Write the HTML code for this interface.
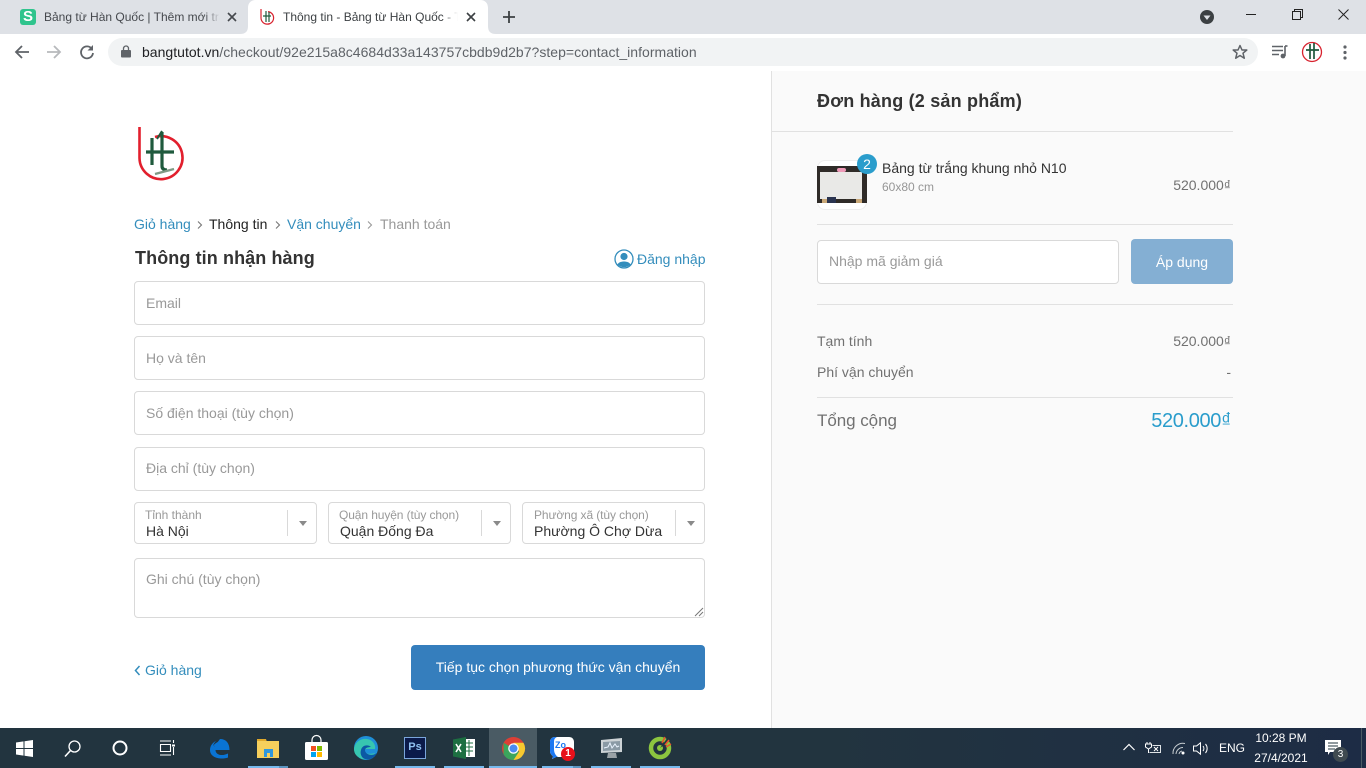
<!DOCTYPE html>
<html><head><meta charset="utf-8"><style>
*{box-sizing:border-box}
html,body{margin:0;padding:0;width:1366px;height:768px;overflow:hidden;background:#fff;font-family:"Liberation Sans","Noto Sans CJK SC",sans-serif}
.t{position:absolute;white-space:nowrap;font-size:14px;line-height:18px}
.a{position:absolute}
svg{position:absolute;overflow:visible}
.inp{position:absolute;left:134px;width:571px;height:44px;border:1px solid #d9d9d9;border-radius:4px;background:#fff}
.sel{position:absolute;top:502px;width:183px;height:42px;border:1px solid #d9d9d9;border-radius:4px;background:#fff}
.sel i{position:absolute;right:28px;top:7px;height:26px;width:1px;background:#d9d9d9}
.sel b{position:absolute;right:9px;top:18px;width:0;height:0;border-left:4px solid transparent;border-right:4px solid transparent;border-top:5px solid #8a8a8a}
.ph{color:#999}
.bl{color:#338dbc}
.d{color:#333}
.ul{position:absolute;bottom:0;height:2px;background:#76b9ed}
</style></head><body>

<!-- browser chrome -->
<div class="a" style="left:0;top:0;width:1366px;height:34px;background:#dee1e6"></div>
<svg style="left:240px;top:0" width="256" height="34"><path d="M0 34C6 34 8 31 8 26V8C8 3 11 0 16 0H240C245 0 248 3 248 8V26C248 31 250 34 256 34Z" fill="#fff"/></svg>
<div class="a" style="left:0;top:34px;width:1366px;height:37px;background:#fff"></div>
<div class="a" style="left:20px;top:9px;width:16px;height:16px;background:#2fc48d;border-radius:3px"></div>
<div class="t" style="left:20px;top:8px;width:16px;text-align:center;color:#fff;font-weight:bold;font-size:15px">S</div>
<div class="t" style="left:44px;top:8px;font-size:12px;width:176px;overflow:hidden;color:#45484d">Bảng từ Hàn Quốc | Thêm mới trang</div>
<div class="a" style="left:204px;top:8px;width:16px;height:18px;background:linear-gradient(90deg,rgba(222,225,230,0),#dee1e6)"></div>
<svg style="left:227px;top:12px" width="10" height="10"><path d="M1 1L9 9M9 1L1 9" stroke="#45484d" stroke-width="1.6"/></svg>
<svg style="left:259px;top:8px" width="16" height="18" viewBox="0 0 16 18"><path d="M2 1V10A6.300 6.300 0 1 0 9 3.600" fill="none" stroke="#d8232f" stroke-width="1.200"/><path d="M7 3V14M4 8H12M10 4V14" stroke="#1e5a3c" stroke-width="1.200" fill="none"/></svg>
<div class="t" style="left:283px;top:8px;font-size:12px;width:175px;overflow:hidden;color:#3c4043">Thông tin - Bảng từ Hàn Quốc - Thêm</div>
<div class="a" style="left:442px;top:8px;width:16px;height:18px;background:linear-gradient(90deg,rgba(255,255,255,0),#fff)"></div>
<svg style="left:466px;top:12px" width="10" height="10"><path d="M1 1L9 9M9 1L1 9" stroke="#3c4043" stroke-width="1.600"/></svg>
<svg style="left:503px;top:11px" width="12" height="12"><path d="M6 0V12M0 6H12" stroke="#3c4043" stroke-width="1.800"/></svg>

<svg style="left:1200px;top:10px" width="14" height="14"><circle cx="7" cy="7" r="7" fill="#3c4043"/><path d="M3.500 5.500H10.500L7 10Z" fill="#dee1e6"/></svg>
<div class="a" style="left:1246px;top:14px;width:10px;height:1px;background:#222"></div>
<svg style="left:1292px;top:9px" width="11" height="11"><path d="M.5 2.500H8.500V10.500H.5ZM2.500 2.500V.5H10.500V8.500H8.500" fill="none" stroke="#222"/></svg>
<svg style="left:1338px;top:9px" width="11" height="11"><path d="M.5 .5L10.500 10.500M10.500 .5L.5 10.500" stroke="#222" stroke-width="1"/></svg>

<svg style="left:14px;top:44px" width="16" height="16"><path d="M15 8H2M8 2L2 8L8 14" fill="none" stroke="#5f6368" stroke-width="1.800"/></svg>
<svg style="left:46px;top:44px" width="16" height="16"><path d="M1 8H14M8 2L14 8L8 14" fill="none" stroke="#b7b9bc" stroke-width="1.800"/></svg>
<svg style="left:79px;top:44px" width="16" height="16"><path d="M13 5A6 6 0 1 0 14 9" fill="none" stroke="#5f6368" stroke-width="1.800"/><path d="M14 1V6.500H8.500Z" fill="#5f6368"/></svg>
<div class="a" style="left:108px;top:38px;width:1150px;height:28px;border-radius:14px;background:#f1f3f4"></div>
<svg style="left:121px;top:45px" width="10" height="13"><path d="M2.500 5V3.500A2.500 2.500 0 0 1 7.500 3.500V5" fill="none" stroke="#5f6368" stroke-width="1.300"/><rect y="5" width="10" height="7.500" rx="1" fill="#5f6368"/></svg>
<div class="t" style="left:142px;top:43px;font-size:14px;color:#5f6368;letter-spacing:.02px"><span style="color:#202124">bangtutot.vn</span>/checkout/92e215a8c4684d33a143757cbdb9d2b7?step=contact_information</div>
<svg style="left:1232px;top:44px" width="16" height="16" viewBox="0 0 16 16"><path d="M8 1.500L10 6H14.800L11 9.200L12.300 14.200L8 11.500L3.700 14.200L5 9.200L1.200 6H6Z" fill="none" stroke="#5f6368" stroke-width="1.500" stroke-linejoin="round"/></svg>
<svg style="left:1272px;top:45px" width="16" height="14"><path d="M0 1.500H11M0 5.500H11M0 9.500H7" stroke="#5f6368" stroke-width="1.400"/><path d="M13 1V11" stroke="#5f6368" stroke-width="1.600"/><path d="M13 1H15.500" stroke="#5f6368" stroke-width="1.600"/><circle cx="11" cy="11" r="2.400" fill="#5f6368"/></svg>
<svg style="left:1301px;top:41px" width="22" height="22" viewBox="0 0 22 22"><circle cx="11" cy="11" r="9.500" fill="#fff" stroke="#d8232f" stroke-width="1.300"/><path d="M9 3V18M13 2V18M5 9H18" stroke="#1e5a3c" stroke-width="1.700" fill="none"/></svg>
<svg style="left:1343px;top:45px" width="4" height="15"><circle cx="2" cy="2" r="1.600" fill="#5f6368"/><circle cx="2" cy="7.500" r="1.600" fill="#5f6368"/><circle cx="2" cy="13" r="1.600" fill="#5f6368"/></svg>

<!-- right panel -->
<div class="a" style="left:771px;top:71px;width:595px;height:657px;background:#fafafa;border-left:1px solid #e1e1e1"></div>
<div class="t" style="left:817px;top:90px;font-size:18px;line-height:22px;font-weight:bold;color:#333;letter-spacing:.2px">Đơn hàng (2 sản phẩm)</div>
<div class="a" style="left:772px;top:131px;width:461px;height:1px;background:#e1e1e1"></div>

<div class="a" style="left:817px;top:160px;width:50px;height:50px;border-radius:8px;border:1px solid #eee;background:#fff"></div>
<div class="a" style="left:817px;top:166px;width:50px;height:37px;background:#2f2b28"></div>
<div class="a" style="left:820px;top:172px;width:42px;height:27px;background:#e9e9e7"></div>
<div class="a" style="left:837px;top:168px;width:9px;height:4px;border-radius:2px;background:#ee9ab8"></div>
<div class="a" style="left:822px;top:199px;width:6px;height:4px;background:#c9a878"></div>
<div class="a" style="left:856px;top:199px;width:6px;height:4px;background:#c9a878"></div>
<div class="a" style="left:827px;top:197px;width:9px;height:6px;background:#2a3450"></div>
<div class="t" style="left:857px;top:154px;width:20px;height:20px;border-radius:50%;background:#2a9dcc;color:#fff;text-align:center;line-height:20px;font-size:14px">2</div>
<div class="t" style="left:882px;top:159px;color:#333">Bảng từ trắng khung nhỏ N10</div>
<div class="t" style="left:882px;top:180px;font-size:12px;line-height:15px;color:#969696">60x80 cm</div>
<div class="t" style="right:135px;top:176px;color:#717171">520.000₫</div>
<div class="a" style="left:817px;top:224px;width:416px;height:1px;background:#e1e1e1"></div>

<div class="a" style="left:817px;top:240px;width:302px;height:44px;background:#fff;border:1px solid #d9d9d9;border-radius:4px"></div>
<div class="t ph" style="left:829px;top:252px">Nhập mã giảm giá</div>
<div class="t" style="left:1131px;top:239px;width:102px;height:45px;background:#84afd3;border-radius:4px;color:#fff;text-align:center;line-height:46px">Áp dụng</div>
<div class="a" style="left:817px;top:304px;width:416px;height:1px;background:#e1e1e1"></div>

<div class="t" style="left:817px;top:332px;color:#717171">Tạm tính</div>
<div class="t" style="right:135px;top:332px;color:#717171">520.000₫</div>
<div class="t" style="left:817px;top:363px;color:#717171">Phí vận chuyển</div>
<div class="t" style="right:135px;top:363px;color:#717171">-</div>
<div class="a" style="left:817px;top:397px;width:416px;height:1px;background:#e1e1e1"></div>
<div class="t" style="left:817px;top:411px;font-size:17px;line-height:20px;color:#717171;letter-spacing:-.05px">Tổng cộng</div>
<div class="t bl" style="right:135px;top:409px;font-size:20px;line-height:24px;color:#2a9dcc;letter-spacing:-.35px">520.000₫</div>

<!-- left -->
<svg style="left:137px;top:126px" width="48" height="57" viewBox="0 0 48 57"><path d="M2.500 1V32A21.500 21.500 0 1 0 18 11" fill="none" stroke="#e21f2d" stroke-width="2.600"/><path d="M15 12V39M25 6V40C25 43 27 44 30 44M9 26H37" stroke="#1f5a3d" stroke-width="3.200" fill="none"/><path d="M25 5L20 13" stroke="#1f5a3d" stroke-width="2" fill="none"/><path d="M18 48L37 43" stroke="#7f9a85" stroke-width="2.400"/></svg>

<div class="t bl" style="left:134px;top:215px">Giỏ hàng</div>
<svg style="left:197px;top:221px" width="6" height="8"><path d="M1 .5L4.500 4L1 7.500" fill="none" stroke="#777" stroke-width="1.100"/></svg>
<div class="t" style="left:209px;top:215px;color:#222">Thông tin</div>
<svg style="left:275px;top:221px" width="6" height="8"><path d="M1 .5L4.500 4L1 7.500" fill="none" stroke="#777" stroke-width="1.100"/></svg>
<div class="t bl" style="left:287px;top:215px">Vận chuyển</div>
<svg style="left:367px;top:221px" width="6" height="8"><path d="M1 .5L4.500 4L1 7.500" fill="none" stroke="#999" stroke-width="1.100"/></svg>
<div class="t" style="left:380px;top:215px;color:#999">Thanh toán</div>

<div class="t" style="left:135px;top:247px;font-size:18px;line-height:22px;font-weight:bold;color:#333;letter-spacing:.1px">Thông tin nhận hàng</div>
<svg style="left:614px;top:249px" width="20" height="20" viewBox="0 0 20 20"><circle cx="10" cy="10" r="9" fill="#fff" stroke="#338dbc" stroke-width="1.300"/><circle cx="10" cy="7.500" r="3.600" fill="#338dbc"/><path d="M3.500 15.500C5 11.500 15 11.500 16.500 15.500A9 9 0 0 1 3.500 15.500Z" fill="#338dbc"/></svg>
<div class="t bl" style="left:637px;top:250px">Đăng nhập</div>

<div class="inp" style="top:281px"></div><div class="t ph" style="left:146px;top:294px">Email</div>
<div class="inp" style="top:336px"></div><div class="t ph" style="left:146px;top:349px">Họ và tên</div>
<div class="inp" style="top:391px"></div><div class="t ph" style="left:146px;top:404px">Số điện thoại (tùy chọn)</div>
<div class="inp" style="top:447px"></div><div class="t ph" style="left:146px;top:459px">Địa chỉ (tùy chọn)</div>

<div class="sel" style="left:134px"><i></i><b></b></div>
<div class="t ph" style="left:145px;top:508px;font-size:12px;line-height:15px">Tỉnh thành</div>
<div class="t d" style="left:146px;top:522px">Hà Nội</div>
<div class="sel" style="left:328px"><i></i><b></b></div>
<div class="t ph" style="left:339px;top:508px;font-size:12px;line-height:15px;letter-spacing:-.1px">Quận huyện (tùy chọn)</div>
<div class="t d" style="left:340px;top:522px">Quận Đống Đa</div>
<div class="sel" style="left:522px"><i></i><b></b></div>
<div class="t ph" style="left:534px;top:508px;font-size:12px;line-height:15px;letter-spacing:-.1px">Phường xã (tùy chọn)</div>
<div class="t d" style="left:534px;top:522px">Phường Ô Chợ Dừa</div>

<div class="inp" style="top:558px;height:60px"></div><div class="t ph" style="left:146px;top:570px">Ghi chú (tùy chọn)</div>
<svg style="left:694px;top:607px" width="10" height="10"><path d="M9 1L1 9M9 5L5 9" stroke="#777" stroke-width="1"/></svg>

<svg style="left:134px;top:665px" width="7" height="11"><path d="M5.500 1L1.500 5.500L5.500 10" fill="none" stroke="#338dbc" stroke-width="1.500"/></svg>
<div class="t bl" style="left:145px;top:661px">Giỏ hàng</div>
<div class="t" style="left:411px;top:645px;width:294px;height:45px;background:#357ebd;border-radius:4px;color:#fff;text-align:center;line-height:44px">Tiếp tục chọn phương thức vận chuyển</div>

<!-- taskbar -->
<div class="a" style="left:0;top:728px;width:1366px;height:40px;background:linear-gradient(90deg,#22343f 0,#22343f 60%,#1d2c45 100%)"></div>
<svg style="left:16px;top:740px" width="17" height="17"><path d="M0 2.500L7.500 1.400V8H0ZM8.500 1.300L17 0V8H8.500ZM0 9H7.500V15.600L0 14.500ZM8.500 9H17V17L8.500 15.700Z" fill="#fff"/></svg>
<svg style="left:64px;top:740px" width="17" height="18"><circle cx="10.500" cy="6.500" r="5.500" fill="none" stroke="#fff" stroke-width="1.300"/><path d="M6.500 10.500L1 16.500" stroke="#fff" stroke-width="1.600"/></svg>
<svg style="left:112px;top:740px" width="16" height="16"><circle cx="8" cy="8" r="6.500" fill="none" stroke="#fff" stroke-width="2"/></svg>
<svg style="left:160px;top:740px" width="16" height="16"><path d="M.5 4.500H10.500V11.500H.5ZM0 1H11M0 15H11M13.500 0V3M13.500 7V15" fill="none" stroke="#fff" stroke-width="1.100"/><rect x="12" y="4.500" width="3" height="2" fill="#fff"/></svg>
<svg style="left:209px;top:738px" width="21" height="21" viewBox="0 0 21 21"><path d="M11 1C17 1 20.500 5 20.500 12H6.500C6.500 17 13 18.500 19 15.500V19.500C12 22 1 20 1 12C1 8 3.500 4.500 7 3C5 5 4.500 6.500 4 8C7 4 10 3.500 11 3.500C15 3.500 15.500 7 15.500 8.500H6.800C7 7 6 7 5 9" fill="#0a74d4"/><path d="M6.800 8.500H15.500" stroke="#0a74d4"/></svg>
<svg style="left:257px;top:739px" width="22" height="20" viewBox="0 0 22 20"><path d="M0 0H9L10 3H0Z" fill="#e0a92c"/><rect y="2" width="22" height="17" fill="#f6cf5c"/><rect x="7" y="10" width="9" height="8" fill="#2f97dd"/><rect x="10" y="14" width="3" height="4" fill="#f6cf5c"/></svg>
<svg style="left:305px;top:736px" width="23" height="24" viewBox="0 0 23 24"><path d="M7 7V4A4.500 4.500 0 0 1 16 4V7" fill="none" stroke="#fff" stroke-width="1.200"/><rect y="6" width="23" height="18" rx="1.500" fill="#fff"/><rect x="6" y="10" width="5" height="5" fill="#f25022"/><rect x="12" y="10" width="5" height="5" fill="#7fba00"/><rect x="6" y="16" width="5" height="5" fill="#00a4ef"/><rect x="12" y="16" width="5" height="5" fill="#ffb900"/></svg>
<svg style="left:354px;top:736px" width="24" height="24" viewBox="0 0 24 24"><circle cx="12" cy="12" r="12" fill="#1f8fd8"/><path d="M0 13C1 5 8 2 13 3C19 4 22 9 21 13H8C8 17 14 19 21 17C18 23 12 24 8 23C3 21 0 18 0 13Z" fill="#37c6b0"/><path d="M7 14C8 9 14 8 17 11C14 11 11 12 11 14C11 18 17 21 23 17C20 23 13 25 9 22C7 20 6 17 7 14Z" fill="#0c59a4"/></svg>
<div class="t" style="left:404px;top:737px;width:22px;height:22px;background:#0b1a4a;border:1.500px solid #7aa5dc;color:#8fc0f0;font-weight:bold;font-size:11px;line-height:19px;text-align:center">Ps</div>
<svg style="left:453px;top:737px" width="22" height="22" viewBox="0 0 22 22"><rect x="10" y="2" width="12" height="18" fill="#fff"/><path d="M12 6H20M12 10H20M12 14H20M16 3V19" stroke="#1d6f42"/><path d="M0 2.500L13 0V22L0 19.500Z" fill="#1d6f42"/><path d="M3 7L8 15M8 7L3 15" stroke="#fff" stroke-width="1.600"/></svg>
<div class="a" style="left:489px;top:728px;width:48px;height:40px;background:#4a5b64"></div>
<svg style="left:502px;top:737px" width="23" height="23" viewBox="0 0 24 24"><circle cx="12" cy="12" r="12" fill="#dd3f35"/><path d="M12 12L22.400 18A12 12 0 0 1 1.600 18L1.600 6Z" fill="#3ba55c"/><path d="M12 6H22.400A12 12 0 0 1 12 24L18 15Z" fill="#f7c92f"/><circle cx="12" cy="12" r="5.500" fill="#fff"/><circle cx="12" cy="12" r="4.200" fill="#4a8af0"/></svg>
<svg style="left:550px;top:737px" width="26" height="24" viewBox="0 0 26 24"><path d="M5 0H19C22 0 24 2 24 5V15C24 18 22 20 19 20H6L2 22L3 19C1 18 0 16 0 14V5C0 2 2 0 5 0Z" fill="#fff"/><path d="M5 0C2 0 0 2 0 5V14C0 16 1 18 3 19L2 22L6 20H8C5 18 4 15 4 12V5C4 2 5 1 7 0Z" fill="#1b78f2"/><circle cx="18" cy="17" r="7" fill="#e8101a"/></svg>
<div class="t" style="left:555px;top:739px;font-size:9px;line-height:12px;color:#1b78f2;font-weight:bold">Zo</div>
<div class="t" style="left:562px;top:747px;width:12px;font-size:10px;line-height:14px;color:#fff;font-weight:bold;text-align:center">1</div>
<svg style="left:600px;top:738px" width="23" height="21" viewBox="0 0 23 21"><path d="M1 2L22 0V14L1 15Z" fill="#cdd3d6"/><path d="M3 4L20 3V12L3 13Z" fill="#8a9aa5"/><path d="M4 10L8 9L10 5L12 10L15 6L17 9L19 8" fill="none" stroke="#eaf4ff" stroke-width="1"/><path d="M8 15H16L17 20H7Z" fill="#9aa2a6"/></svg>
<svg style="left:649px;top:736px" width="22" height="23" viewBox="0 0 22 23"><circle cx="11" cy="12" r="9" fill="none" stroke="#8cc63f" stroke-width="4.500"/><circle cx="11" cy="12" r="3" fill="#8cc63f"/><path d="M11 12L19 1L22 4Z" fill="#22343f"/><path d="M13 7L16 1M16 9L20 4M17 11L22 8" stroke="#e8502c" stroke-width="1.500"/></svg>

<div class="ul" style="left:248px;width:31px"></div><div class="ul" style="left:279px;width:9px;background:#5a94c0"></div>
<div class="ul" style="left:395px;width:40px"></div>
<div class="ul" style="left:444px;width:40px"></div>
<div class="ul" style="left:489px;width:48px"></div>
<div class="ul" style="left:542px;width:31px"></div><div class="ul" style="left:573px;width:8px;background:#5a94c0"></div>
<div class="ul" style="left:591px;width:40px"></div>
<div class="ul" style="left:640px;width:40px"></div>

<svg style="left:1123px;top:743px" width="12" height="8"><path d="M.5 7L6 1.500L11.500 7" fill="none" stroke="#fff" stroke-width="1.200"/></svg>
<svg style="left:1145px;top:742px" width="16" height="12"><path d="M2 0V2M5 0V2M.5 2H6.500V5L3.500 7L.5 5ZM3.500 7V11" fill="none" stroke="#fff"/><path d="M7.500 3.500H15.500V10.500H4.500" fill="none" stroke="#dfe3e6"/><path d="M9 5L13 9M13 5L9 9" stroke="#fff"/></svg>
<svg style="left:1172px;top:743px" width="14" height="12"><path d="M1 11A10 10 0 0 1 13 .5M4 11A7 7 0 0 1 11 4.500M7 11A4 4 0 0 1 10 8" fill="none" stroke="#c8ced2"/><circle cx="11" cy="10" r="1.500" fill="#fff"/></svg>
<svg style="left:1193px;top:742px" width="16" height="13"><path d="M.5 4H3.500L7.500 .8V12.200L3.500 9H.5Z" fill="none" stroke="#fff"/><path d="M10 4A4 4 0 0 1 10 9M12.500 2A7 7 0 0 1 12.500 11" fill="none" stroke="#fff"/></svg>
<div class="t" style="left:1219px;top:739px;font-size:12px;line-height:18px;color:#fff">ENG</div>
<div class="t" style="left:1248px;top:731px;width:66px;text-align:center;font-size:12px;line-height:15px;color:#fff">10:28 PM</div>
<div class="t" style="left:1248px;top:751px;width:66px;text-align:center;font-size:12px;line-height:15px;color:#fff">27/4/2021</div>
<svg style="left:1325px;top:740px" width="16" height="16"><path d="M0 0H16V12H5L3 15V12H0Z" fill="#fff"/><path d="M3 3H13M3 6H13M3 9H10" stroke="#22343f"/></svg>
<div class="t" style="left:1333px;top:747px;width:15px;height:15px;border-radius:50%;background:#3f4a50;color:#fff;font-size:10px;line-height:15px;text-align:center">3</div>
<div class="a" style="left:1361px;top:728px;width:1px;height:40px;background:#4a5b64"></div>
</body></html>
